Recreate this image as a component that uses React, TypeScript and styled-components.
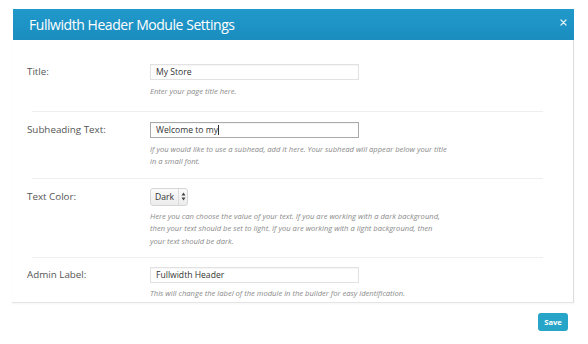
import React from 'react';
import styled, { createGlobalStyle } from 'styled-components';

const GlobalStyle = createGlobalStyle`
  html, body {
    margin: 0;
    padding: 0;
    background: #ffffff;
  }
  body {
    font-family: 'Open Sans', 'Liberation Sans', sans-serif;
  }
`;

const Page = styled.div`
  width: 588px;
  height: 344px;
  padding: 9px 14px 0 12px;
  box-sizing: border-box;
  overflow: hidden;
`;

const Modal = styled.div`
  display: flex;
  flex-direction: column;
`;

const Header = styled.div`
  display: flex;
  align-items: center;
  justify-content: space-between;
  height: 31px;
  padding: 0 7px 0 16px;
  margin-left: 1px;
  background: linear-gradient(#2199cb, #1b8dbf);
  color: #ffffff;
`;

const HeaderTitle = styled.h1`
  margin: 0;
  font-size: 14px;
  font-weight: 400;
  letter-spacing: -0.45px;
`;

const CloseButton = styled.span`
  display: flex;
  align-items: center;
  margin-top: -4px;
  opacity: 0.85;
`;

const Body = styled.div`
  display: flex;
  flex-direction: column;
  height: 263px;
  padding-top: 24px;
  box-sizing: border-box;
  border-right: 1px solid #dcdcdc;
  border-bottom: 1px solid #e4e4e4;
  box-shadow: 0 1px 2px rgba(0, 0, 0, 0.04);
`;

const Row = styled.div`
  display: flex;
  padding: 0 0 0 15px;
`;

const Label = styled.div<{ $top?: number }>`
  width: 123px;
  flex-shrink: 0;
  font-size: 9.8px;
  color: #555555;
  line-height: 16px;
  padding-top: ${(p) => p.$top ?? 0}px;
`;

const Field = styled.div`
  display: flex;
  flex-direction: column;
`;

const TextInput = styled.div<{ $focused?: boolean }>`
  width: 209px;
  height: 16px;
  box-sizing: border-box;
  border: 1px solid ${(p) => (p.$focused ? '#a9a9a9' : '#e2e2e2')};
  box-shadow: inset 0 1px 1px rgba(0, 0, 0, 0.04);
  padding: 0 5px;
  font-size: 8.6px;
  line-height: 14px;
  color: #333333;
  display: flex;
  align-items: center;
`;

const Caret = styled.span`
  display: inline-block;
  width: 1px;
  height: 10px;
  background: #333333;
  margin-left: 0.5px;
`;

const SelectBox = styled.div`
  display: flex;
  align-items: stretch;
  width: 38px;
  height: 18px;
  box-sizing: border-box;
  border: 1px solid #d6d6d6;
  border-radius: 3px;
  background: linear-gradient(#fbfbfb, #ececec);
  font-size: 8.6px;
  color: #333333;
`;

const SelectValue = styled.span`
  display: flex;
  align-items: center;
  padding-left: 4px;
  width: 23px;
  border-right: 1px solid #dcdcdc;
`;

const SelectArrows = styled.span`
  display: flex;
  align-items: center;
  justify-content: center;
  flex: 1;
`;

const Description = styled.p<{ $gap: number }>`
  margin: ${(p) => p.$gap}px 0 0;
  font-size: 7.6px;
  font-style: italic;
  line-height: 12.5px;
  color: #8a8a8a;
  white-space: nowrap;
`;

const Divider = styled.div<{ $before: number; $after: number }>`
  height: 1px;
  background: #eeeeee;
  margin: ${(p) => p.$before}px 30px ${(p) => p.$after}px 20px;
`;

const Footer = styled.div`
  display: flex;
  justify-content: flex-end;
  padding: 10px 6px 0 0;
`;

const SaveButton = styled.button`
  width: 30px;
  height: 18px;
  border: none;
  border-radius: 3px;
  background: #27a5c8;
  color: #ffffff;
  font-family: 'Open Sans', 'Liberation Sans', sans-serif;
  font-size: 7.6px;
  font-weight: 700;
  padding: 0;
  cursor: pointer;
`;

const CloseIcon = () => (
  <svg width="7" height="7" viewBox="0 0 7 7">
    <path d="M1 1 L6 6 M6 1 L1 6" stroke="#ffffff" strokeWidth="1.3" strokeLinecap="round" />
  </svg>
);

const UpDownIcon = () => (
  <svg width="5" height="9" viewBox="0 0 5 9">
    <path d="M2.5 0.5 L4.5 3.5 L0.5 3.5 Z M2.5 8.5 L4.5 5.5 L0.5 5.5 Z" fill="#444444" />
  </svg>
);

export default function App() {
  return (
    <>
      <GlobalStyle />
      <Page>
        <Modal>
          <Header>
            <HeaderTitle>Fullwidth Header Module Settings</HeaderTitle>
            <CloseButton>
              <CloseIcon />
            </CloseButton>
          </Header>

          <Body>
            <Row>
              <Label>Title:</Label>
              <Field>
                <TextInput>My Store</TextInput>
                <Description $gap={5}>Enter your page title here.</Description>
              </Field>
            </Row>
            <Divider $before={13} $after={10} />

            <Row>
              <Label>Subheading Text:</Label>
              <Field>
                <TextInput $focused>
                  Welcome to my
                  <Caret />
                </TextInput>
                <Description $gap={5}>
                  If you would like to use a subhead, add it here. Your subhead will appear below your title
                  <br />
                  in a small font.
                </Description>
              </Field>
            </Row>
            <Divider $before={10} $after={9} />

            <Row>
              <Label $top={1}>Text Color:</Label>
              <Field>
                <SelectBox>
                  <SelectValue>Dark</SelectValue>
                  <SelectArrows>
                    <UpDownIcon />
                  </SelectArrows>
                </SelectBox>
                <Description $gap={4}>
                  Here you can choose the value of your text. If you are working with a dark background,
                  <br />
                  then your text should be set to light. If you are working with a light background, then
                  <br />
                  your text should be dark.
                </Description>
              </Field>
            </Row>
            <Divider $before={10} $after={9} />

            <Row>
              <Label>Admin Label:</Label>
              <Field>
                <TextInput>Fullwidth Header</TextInput>
                <Description $gap={4}>
                  This will change the label of the module in the builder for easy identification.
                </Description>
              </Field>
            </Row>
          </Body>

          <Footer>
            <SaveButton>Save</SaveButton>
          </Footer>
        </Modal>
      </Page>
    </>
  );
}
